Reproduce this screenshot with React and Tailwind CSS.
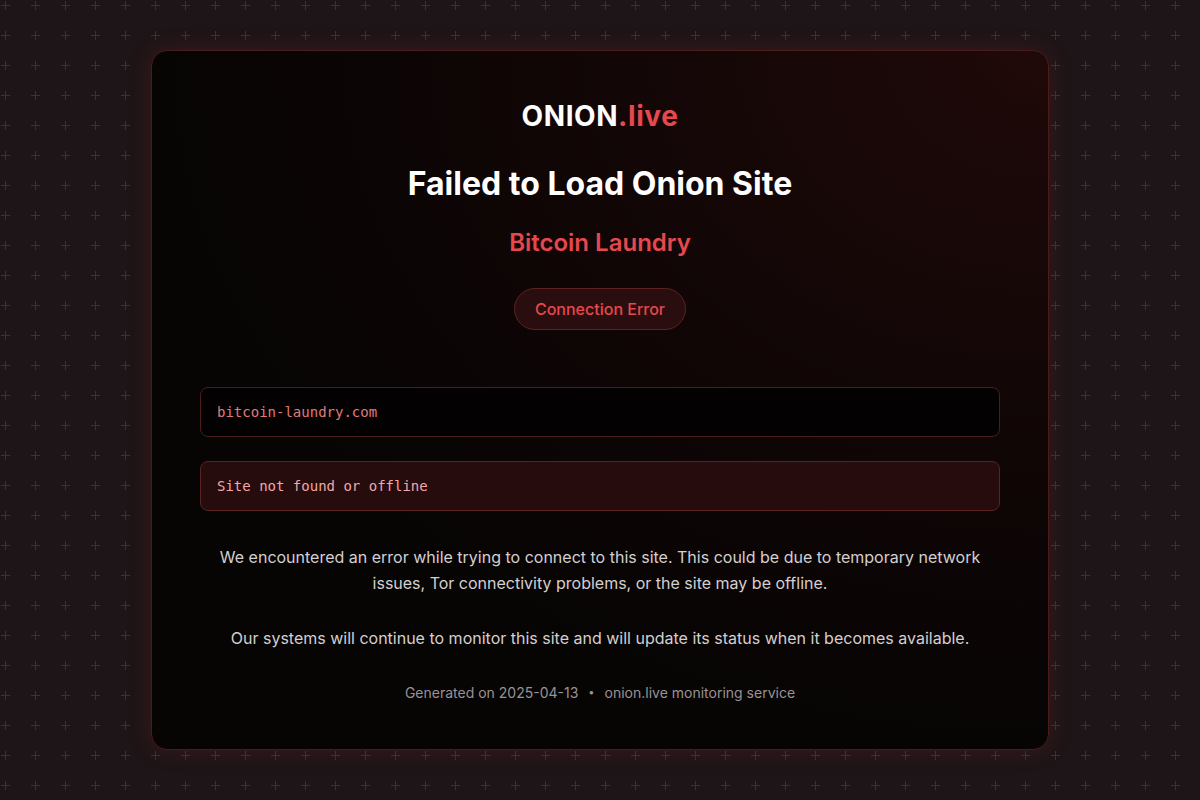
export default function App() {
  return (
    <div className="relative min-h-[800px] w-full overflow-hidden bg-[#1d1517] font-['Inter',sans-serif]">
      {/* plus pattern */}
      <svg className="absolute inset-0 h-full w-full" aria-hidden="true">
        <defs>
          <pattern id="plus" width="30" height="30" patternUnits="userSpaceOnUse">
            <path d="M1 5.5h9M5.5 1v9" stroke="#3a3134" strokeWidth="1" />
          </pattern>
        </defs>
        <rect width="100%" height="100%" fill="url(#plus)" />
      </svg>

      <div className="relative flex justify-center pt-[50px]">
        <div className="w-[898px] h-[700px] rounded-2xl border border-[#4a1d1d] bg-[#070404] bg-[radial-gradient(ellipse_at_top_right,#200909_0%,#120606_35%,transparent_70%)] px-12 pt-[45px] shadow-[0_0_24px_rgba(200,40,40,0.18)]">
          <div className="flex flex-col items-center text-center">
            <div className="text-[28px] font-bold leading-10 tracking-[0.02em] text-white">
              ONION<span className="text-[#e5484d]">.live</span>
            </div>
            <h1 className="mt-[28px] text-[32px] font-bold leading-10 text-white">
              Failed to Load Onion Site
            </h1>
            <h2 className="mt-[23px] text-[24px] font-semibold leading-8 text-[#e5484d]">
              Bitcoin Laundry
            </h2>
            <div className="mt-[29px] rounded-full border border-[#5c2222] bg-[#2a0d0e] px-5 py-2 text-base font-medium leading-6 text-[#e5484d]">
              Connection Error
            </div>
          </div>

          <div className="mt-[57px] flex flex-col gap-6">
            <div className="rounded-lg border border-[#4a1d1d] bg-[#030101] px-4 py-[14px] font-['DejaVu_Sans_Mono',monospace] text-[14px] leading-5 text-[#e07a7a]">
              bitcoin-laundry.com
            </div>
            <div className="rounded-lg border border-[#5a2222] bg-[#260c0d] px-4 py-[14px] font-['DejaVu_Sans_Mono',monospace] text-[14px] leading-5 text-[#f0a8a8]">
              Site not found or offline
            </div>
          </div>

          <div className="mt-[33px] text-center text-base leading-[26px] text-[#d4cfd0]">
            <p className="px-2">
              We encountered an error while trying to connect to this site. This could be due to temporary network
              issues, Tor connectivity problems, or the site may be offline.
            </p>
            <p className="mt-[29px]">
              Our systems will continue to monitor this site and will update its status when it becomes available.
            </p>
          </div>

          <div className="mt-[32px] flex items-center justify-center gap-2.5 text-sm text-[#9a9293]">
            <span>Generated on 2025-04-13</span>
            <span className="text-[11px]">•</span>
            <span>onion.live monitoring service</span>
          </div>
        </div>
      </div>
    </div>
  );
}
